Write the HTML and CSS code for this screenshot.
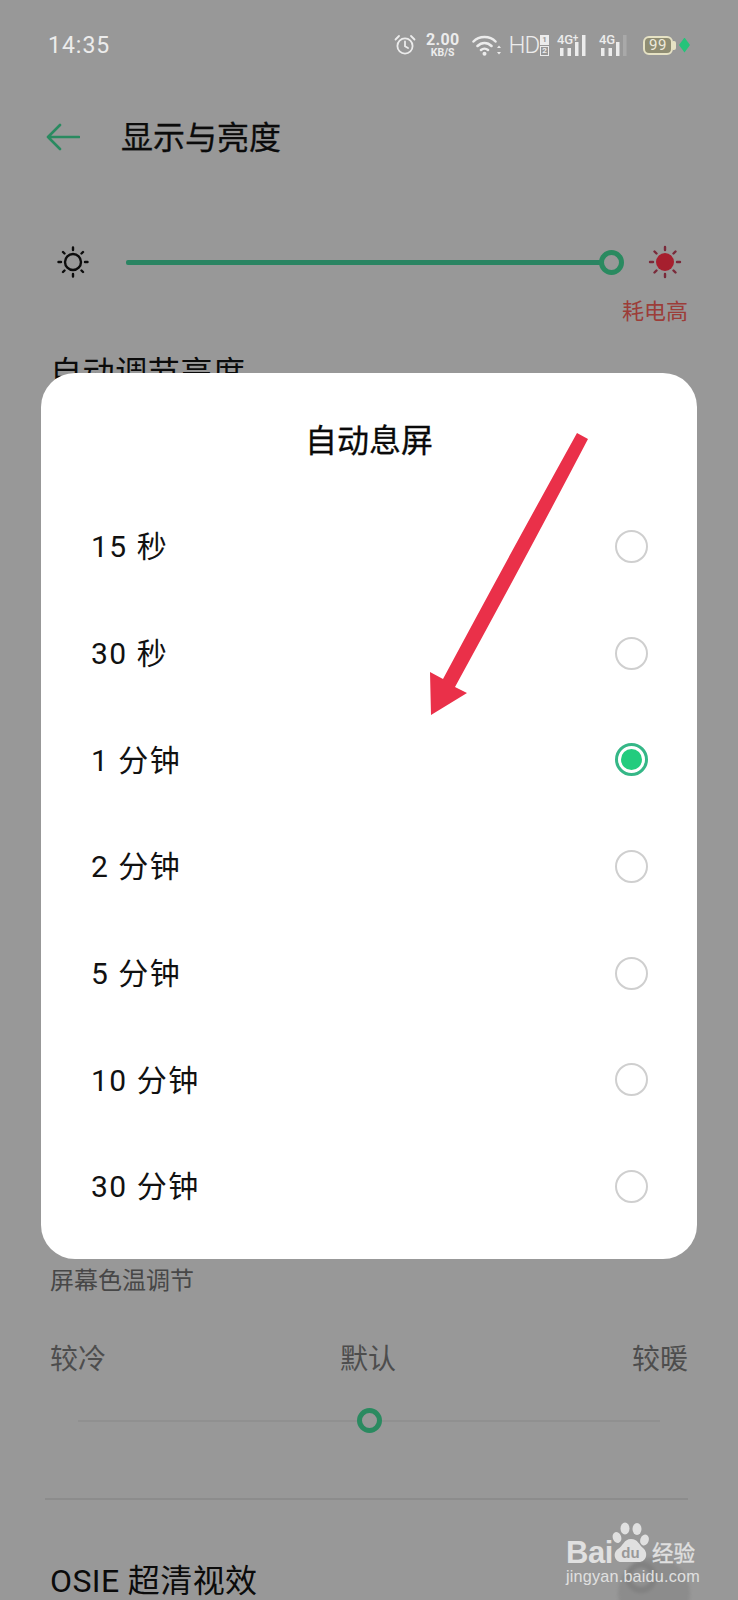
FILE: index.html
```html
<!DOCTYPE html>
<html lang="zh">
<head>
<meta charset="utf-8">
<title>自动息屏</title>
<link rel="stylesheet" href="styles.css">
</head>
<body>
<div class="page">
  <div class="status">
    <span class="time">14:35</span>
    <div class="status-icons">
      <svg class="ic" width="22" height="22" viewBox="0 0 22 22" fill="none" stroke="#ececec" stroke-width="1.8" stroke-linecap="round"><circle cx="11" cy="12" r="7.6"/><path d="M11 7.5V12.3L14 14M1.500 5.500 5 2M20.500 5.500 17 2"/></svg>
      <div class="speed"><span class="speed-num">2.00</span><span class="speed-unit">KB/S</span></div>
      <svg class="ic wifi" width="30" height="22" viewBox="0 0 30 22" fill="none" stroke="#ececec" stroke-width="2.500" stroke-linecap="round"><path d="M1.500 7.500C7 1.500 18 1.500 23.500 7.500M5.500 12C9.500 8 15.500 8 19.500 12M9 16C11 14.300 14 14.300 16 16"/><circle cx="12.500" cy="19.700" r="2" fill="#ececec" stroke="none"/><path d="M27 11.500 25 14H29ZM27 20.500 25 18H29Z" fill="#ececec" stroke="none"/></svg>
      <span class="hd">HD</span>
      <div class="sim"><span class="sim-a">1</span><span class="sim-b">2</span></div>
      <div class="net first"><span class="net-label">4G<sup>+</sup></span>
        <svg width="30" height="22" viewBox="0 0 30 22" fill="#ececec"><rect x="4" y="14" width="3.500" height="8"/><rect x="11.500" y="14" width="3.500" height="8"/><rect x="19" y="8" width="3.500" height="14"/><rect x="26" y="1" width="3.500" height="21"/></svg>
      </div>
      <div class="net"><span class="net-label">4G</span>
        <svg width="30" height="22" viewBox="0 0 30 22" fill="#ececec"><rect x="3" y="14" width="3.500" height="8"/><rect x="10.500" y="14" width="3.500" height="8"/><rect x="18" y="8" width="3.500" height="14"/><rect x="25" y="1" width="3.500" height="21" fill="#a9a9a9"/></svg>
      </div>
      <div class="battery"><span class="battery-level">99</span></div>
      <span class="charge"></span>
    </div>
  </div>

  <div class="header">
    <svg class="back" width="34" height="28" viewBox="0 0 34 28" fill="none" stroke="#2a8a60" stroke-width="2.600" stroke-linecap="round" stroke-linejoin="round"><path d="M33 14H2M14 2 2 14 14 26"/></svg>
    <h1 class="title">显示与亮度</h1>
  </div>

  <div class="brightness">
    <svg class="sun" width="34" height="34" viewBox="0 0 34 34" fill="none" stroke="#0c0c0c" stroke-width="2.400" stroke-linecap="round"><circle cx="17" cy="17" r="8"/><path d="M17 2.500V5M17 29V31.500M2.500 17H5M29 17H31.500M7 7 8.500 8.500M25.500 25.500 27 27M7 27 8.500 25.500M25.500 8.500 27 7"/></svg>
    <div class="track">
      <span class="thumb"></span>
    </div>
    <svg class="sun" width="34" height="34" viewBox="0 0 34 34" fill="none" stroke="#7a2a3a" stroke-width="2.400" stroke-linecap="round"><circle cx="17" cy="17" r="9" fill="#a61f2e" stroke="none"/><path d="M17 2V5M17 29V32M2 17H5M29 17H32M6.500 6.500 8.500 8.500M25.500 25.500 27.500 27.500M6.500 27.500 8.500 25.500M25.500 8.500 27.500 6.500"/></svg>
  </div>
  <p class="warn">耗电高</p>
  <p class="row-title auto">自动调节亮度</p>

  <p class="sub">屏幕色温调节</p>
  <div class="temps"><span>较冷</span><span class="temp-mid">默认</span><span>较暖</span></div>
  <div class="temp-track"><span class="temp-thumb"></span></div>
  <hr class="rule">
  <div class="osie">
    <p class="row-title osie-title">OSIE 超清视效</p>
    <span class="switch"></span>
  </div>

  <div class="dialog">
    <h2 class="dialog-title">自动息屏</h2>
    <ul class="options">
      <li class="option"><span class="label">15 秒</span><span class="radio"></span></li>
      <li class="option"><span class="label">30 秒</span><span class="radio"></span></li>
      <li class="option"><span class="label">1 分钟</span><span class="radio on"></span></li>
      <li class="option"><span class="label">2 分钟</span><span class="radio"></span></li>
      <li class="option"><span class="label">5 分钟</span><span class="radio"></span></li>
      <li class="option"><span class="label">10 分钟</span><span class="radio"></span></li>
      <li class="option"><span class="label">30 分钟</span><span class="radio"></span></li>
    </ul>
  </div>

  <svg class="arrow" width="738" height="1600" viewBox="0 0 738 1600"><path d="M577 433 588 439Q523 563 455 687L467 693 431 715 430 672 443 679Q505 563 577 433Z" fill="#ea3049"/></svg>

  <div class="mark">
    <div class="mark-logo">
      <span class="mark-bai">Bai</span>
      <svg class="paw" width="38" height="40" viewBox="0 0 38 40" fill="#e0e0e0"><ellipse cx="13" cy="6.500" rx="4.500" ry="6"/><ellipse cx="25" cy="7" rx="4.500" ry="6"/><ellipse cx="5" cy="15.500" rx="4.200" ry="5.500" transform="rotate(-20 5 15.500)"/><ellipse cx="32.500" cy="18" rx="4.200" ry="5.500" transform="rotate(20 32.500 18)"/><path d="M19 17C26 17 27 23 31 26 37 31 34 40 27 40H9C3 40 0 31 6 27 11 24 12 17 19 17Z"/><text class="paw-du" x="18.500" y="36" text-anchor="middle">du</text></svg>
      <span class="mark-jy">经验</span>
    </div>
    <div class="mark-url">jingyan.baidu.com</div>
  </div>
</div>
</body>
</html>
```
FILE: styles.css
```css
* { box-sizing: border-box; }
html, body { margin: 0; padding: 0; }
body {
  font-family: Roboto, "Noto Sans CJK SC", "Noto Sans", sans-serif;
  background: #989898;
}
.page {
  position: relative;
  width: 738px;
  height: 1600px;
  overflow: hidden;
  background: #989898;
}
p, h1, h2, ul { margin: 0; padding: 0; font-weight: 400; }

/* status bar */
.status {
  height: 90px;
  padding: 0 48px;
  display: flex;
  align-items: center;
  justify-content: space-between;
  color: #ececec;
}
.time { font-size: 23px; letter-spacing: 1px; }
.status-icons { display: flex; align-items: center; width: 296px; }
.ic { flex: none; }
.speed { display: flex; flex-direction: column; align-items: center; margin-left: 10px; width: 34px; font-weight: 700; line-height: 1; }
.speed-num { font-size: 16px; letter-spacing: .3px; }
.speed-unit { font-size: 10.500px; }
.wifi { margin-left: 13px; }
.hd { font-size: 24px; margin-left: 6px; letter-spacing: -1px; line-height: 1; font-weight: 300; }
.sim { display: flex; flex-direction: column; gap: 1px; margin-left: 1px; }
.sim-a, .sim-b { width: 9px; height: 10px; font-size: 8px; line-height: 10px; text-align: center; font-weight: 700; }
.sim-a { background: #ececec; color: #989898; }
.sim-b { border: 1px solid #ececec; line-height: 8px; }
.net { position: relative; width: 30px; height: 22px; margin-left: 12px; }
.net svg { display: block; }
.net.first { margin-left: 7px; }
.net-label { position: absolute; left: 1px; top: -1px; font-size: 13px; font-weight: 500; line-height: 1; letter-spacing: -.3px; }
.net-label sup { font-size: 10px; line-height: 0; vertical-align: 3px; }
.battery {
  position: relative;
  width: 32px;
  height: 19px;
  margin-left: 15px;
  border: 2px solid #e6e2c4;
  border-radius: 6px;
  background: #8f8d73;
  color: #eeeadb;
  font-size: 15px;
  line-height: 15px;
  text-align: center;
  letter-spacing: .5px;
}
.battery::after {
  content: "";
  position: absolute;
  right: -5px;
  top: 3px;
  width: 3px;
  height: 9px;
  background: #e6e2c4;
  border-radius: 0 2px 2px 0;
}
.charge { width: 11px; height: 15px; margin-left: 6px; background: #25c47a; clip-path: polygon(50% 0, 100% 50%, 50% 100%, 0 50%); flex: none; }

/* header */
.header { height: 94px; padding-left: 46px; display: flex; align-items: center; }
.back { flex: none; }
.title { margin: 0 0 4px 41px; font-size: 32px; line-height: 44px; -webkit-text-stroke: .3px #0b0b0b; color: #0b0b0b; font-family: "Noto Sans CJK SC", sans-serif; }

/* brightness */
.brightness { margin-top: 61px; height: 34px; padding-left: 56px; display: flex; align-items: center; }
.track { position: relative; width: 486px; height: 5px; margin-left: 36px; margin-right: 36px; background: #2a8462; border-radius: 2px; flex: none; }
.thumb {
  position: absolute;
  right: -12px;
  top: -10px;
  width: 25px;
  height: 25px;
  border: 5px solid #2a8a60;
  border-radius: 50%;
  background: #989898;
}
.warn { margin-top: 15px; padding-right: 50px; text-align: right; font-size: 22px; line-height: 30px; color: #9c3d38; font-family: "Noto Sans CJK SC", sans-serif; }
.row-title { font-size: 32px; line-height: 44px; color: #0b0b0b; font-family: Roboto, "Noto Sans CJK SC", sans-serif; }
.auto { margin: 27px 0 0 50px; letter-spacing: .6px; }

/* below the dialog */
.sub { margin: 867px 0 0 50px; font-size: 24px; line-height: 34px; color: #474747; font-family: "Noto Sans CJK SC", sans-serif; }
.temps { margin-top: 41px; padding: 0 50px; height: 40px; display: flex; justify-content: space-between; font-size: 28px; line-height: 40px; color: #4d4d4d; font-family: "Noto Sans CJK SC", sans-serif; }
.temp-mid { margin-right: 2px; }
.temp-track { position: relative; height: 2px; margin: 43px 78px 0; background: #909090; }
.temp-thumb {
  position: absolute;
  left: 279px;
  top: -12px;
  width: 25px;
  height: 25px;
  border: 5px solid #2a8a60;
  border-radius: 50%;
  background: #989898;
}
.rule { height: 2px; margin: 76px 50px 0 45px; border: 0; background: #8c8c8c; }
.osie { display: flex; justify-content: space-between; margin-top: 59px; padding: 0 48px 0 50px; }
.osie-title { letter-spacing: .4px; }
.switch { width: 72px; height: 72px; margin-top: -2px; border-radius: 50%; background: radial-gradient(circle at 32% 28%, #909090 0 9px, #818181 10px 15px, #8c8c8c 17px 100%); filter: blur(1.500px); flex: none; }

/* dialog */
.dialog {
  position: absolute;
  left: 41px;
  top: 373px;
  width: 656px;
  height: 886px;
  border-radius: 34px;
  background: #fff;
  padding-top: 42px;
}
.dialog-title { height: 46px; font-size: 32px; line-height: 46px; -webkit-text-stroke: .3px #0a0a0a; text-align: center; color: #0a0a0a; font-family: "Noto Sans CJK SC", sans-serif; }
.options { list-style: none; margin-top: 32px; }
.option {
  height: 106.700px;
  padding: 0 49px 0 50px;
  display: flex;
  align-items: center;
  justify-content: space-between;
  font-size: 30px;
  color: #111;
  letter-spacing: 1.500px;
}
.label { margin-bottom: 4px; }
.radio { width: 33px; height: 33px; border: 2px solid #cfcfcf; border-radius: 50%; flex: none; }
.radio.on { position: relative; border: 3px solid #35b787; }
.radio.on::after {
  content: "";
  position: absolute;
  left: 3px;
  top: 3px;
  width: 21px;
  height: 21px;
  border-radius: 50%;
  background: #22cc7e;
}

/* annotation and watermark */
.arrow { position: absolute; left: 0; top: 0; pointer-events: none; }
.mark { position: absolute; left: 566px; top: 1520px; width: 172px; color: #e0e0e0; }
.mark-logo { position: relative; height: 46px; }
.mark-bai { position: absolute; left: 0; top: 15px; font-family: "Liberation Sans", sans-serif; font-weight: 700; font-size: 31px; line-height: 36px; letter-spacing: -.500px; }
.paw { position: absolute; left: 46px; top: 2px; }
.paw-du { font-family: "Liberation Sans", sans-serif; font-size: 15px; font-weight: 700; fill: #989898; }
.mark-jy { position: absolute; left: 86px; top: 17px; font-size: 21.500px; line-height: 30px; -webkit-text-stroke: .4px #e0e0e0; font-family: "Noto Sans CJK SC", sans-serif; }
.mark-url { font-size: 16.200px; line-height: 20px; letter-spacing: .2px; font-family: "Liberation Sans", sans-serif; white-space: nowrap; }
```
